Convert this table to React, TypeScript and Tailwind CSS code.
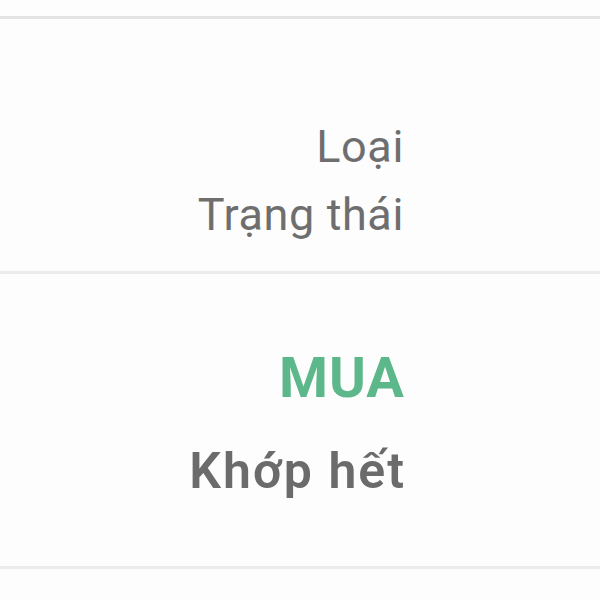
export default function App() {
  return (
    <div className="w-[600px] h-[600px] bg-[#fdfdfd] flex flex-col overflow-hidden font-['Roboto',sans-serif]">
      <div className="h-[16px] shrink-0" />
      <div className="h-[3px] shrink-0 bg-[#e3e3e3]" />
      <div className="h-[252px] shrink-0 flex flex-col items-end pr-[196px] pt-[94px] text-[45px] leading-[68px] text-[#6e6e6e] tracking-[0.6px]">
        <div>Loại</div>
        <div>Trạng thái</div>
      </div>
      <div className="h-[3px] shrink-0 bg-[#ececec]" />
      <div className="h-[292px] shrink-0 flex flex-col items-end pt-[72px]">
        <div className="mr-[195px] text-[56px] leading-[64px] text-[#5cb88a] font-bold tracking-[1px]">MUA</div>
        <div className="mr-[194px] mt-[31px] text-[50px] leading-[60px] text-[#6b6b6b] font-semibold tracking-[2px]">Khớp hết</div>
      </div>
      <div className="h-[3px] shrink-0 bg-[#ececec]" />
    </div>
  );
}
